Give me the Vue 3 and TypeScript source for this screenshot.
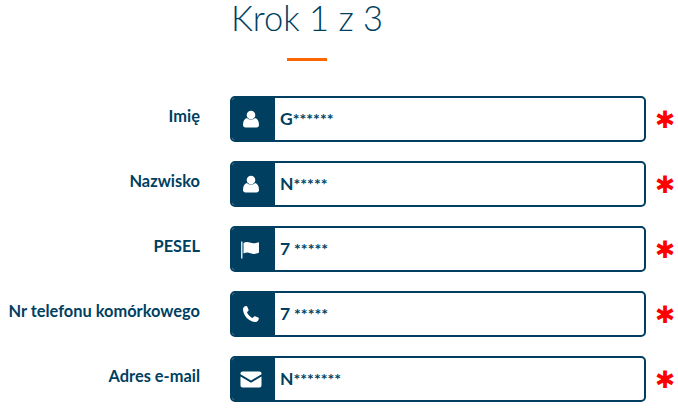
<script setup lang="ts">
const rows = [
  { label: 'Imię', icon: 'user', head: 'G', mask: '******' },
  { label: 'Nazwisko', icon: 'user', head: 'N', mask: '*****' },
  { label: 'PESEL', icon: 'flag', head: '7', mask: ' *****' },
  { label: 'Nr telefonu komórkowego', icon: 'phone', head: '7', mask: ' *****' },
  { label: 'Adres e-mail', icon: 'mail', head: 'N', mask: '*******' },
]
</script>

<template>
  <main class="page">
    <header class="head">
      <h1 class="title">Krok 1 z 3</h1>
      <div class="rule"></div>
    </header>
    <form class="form">
      <div v-for="r in rows" :key="r.label" class="row">
        <label class="label">{{ r.label }}</label>
        <div class="field">
          <span class="icon">
            <svg v-if="r.icon === 'user'" width="18" height="18" viewBox="0 0 18 18">
              <circle cx="9" cy="5" r="4.3" fill="#fff" />
              <path d="M1 15c0-4 1.5-6.5 4-7 1 1 2.500 1.600 4 1.600s3-.6 4-1.600c2.500.5 4 3 4 7 0 1.500-1 2.500-2.500 2.500h-11C2 17.500 1 16.500 1 15z" fill="#fff" />
            </svg>
            <svg v-else-if="r.icon === 'flag'" width="22" height="19" viewBox="0 0 22 18">
              <path d="M1 1h1.500v17H1z" fill="#cfe6f5" />
              <path d="M3.500 2.500c2-1.300 4-1.300 6.500-.4s4.500 1 8.500-.4c.4 0 .5.200.5.500v9.800c-3.500 1.800-6 1.700-8.500.7s-4.500-1-7 .3z" fill="#fff" />
            </svg>
            <svg v-else-if="r.icon === 'phone'" width="18" height="18" viewBox="0 0 18 18">
              <path d="M4.300 1c.5 0 .8.200 1 .7l1.300 3c.2.400.1.800-.2 1.100L5 7.300c.8 2.300 3 4.600 5.600 5.700l1.500-1.500c.3-.3.700-.4 1.100-.2l3 1.300c.5.200.7.600.6 1.100-.3 1.800-1.400 3.300-3.300 3.300C7 17 1 10.500 1 4.300 1 2.500 2.500 1.200 4.300 1z" fill="#fff" />
            </svg>
            <svg v-else width="22" height="17" viewBox="0 0 22 17">
              <path d="M2.500.5h17c1.100 0 2 .9 2 2v.8L11 9.500.5 3.300v-.8c0-1.100.9-2 2-2z" fill="#fff" />
              <path d="M.5 5.500 11 11.700l10.500-6.200v9c0 1.100-.9 2-2 2h-17c-1.100 0-2-.9-2-2z" fill="#fff" />
            </svg>
          </span>
          <span class="value"><b class="lead">{{ r.head }}</b><span class="mask">{{ r.mask }}</span></span>
        </div>
        <span class="req">✱</span>
      </div>
    </form>
  </main>
</template>

<style>
html, body { margin: 0; background: #fff; }
</style>

<style scoped>
.page {
  width: 678px;
  height: 418px;
  overflow: hidden;
  font-family: Lato, "Open Sans", sans-serif;
  color: #003f5f;
}
.head {
  width: 154px;
  margin-left: 230px;
  display: flex;
  flex-direction: column;
  align-items: center;
}
.title {
  margin: 0;
  font-size: 34.5px;
  line-height: 36px;
  font-weight: 300;
  white-space: nowrap;
}
.rule {
  width: 40px;
  height: 3px;
  margin-top: 22px;
  background: #ff6600;
}
.form {
  margin-top: 35px;
  display: flex;
  flex-direction: column;
  gap: 19px;
}
.row {
  display: flex;
  align-items: stretch;
  height: 46px;
}
.label {
  width: 200px;
  margin-right: 30px;
  text-align: right;
  font-size: 16.4px;
  font-weight: 700;
  line-height: 40px;
  white-space: nowrap;
}
.field {
  width: 416px;
  box-sizing: border-box;
  border: 2px solid #003f5f;
  border-radius: 5px;
  display: flex;
  align-items: center;
  overflow: hidden;
}
.icon {
  width: 43px;
  box-sizing: border-box;
  padding-right: 6px;
  align-self: stretch;
  background: #003f5f;
  display: flex;
  align-items: center;
  justify-content: center;
}
.value {
  margin-left: 5px;
  font-size: 17.5px;
  white-space: pre;
  line-height: 40px;
}
.lead { font-weight: 700; }
.mask { font-weight: 700; font-size: 16px; }
.req {
  margin-left: 9px;
  color: #ff0000;
  font-family: "DejaVu Sans", sans-serif;
  font-size: 24px;
  font-weight: 700;
  line-height: 48px;
  height: 46px;
}
</style>
